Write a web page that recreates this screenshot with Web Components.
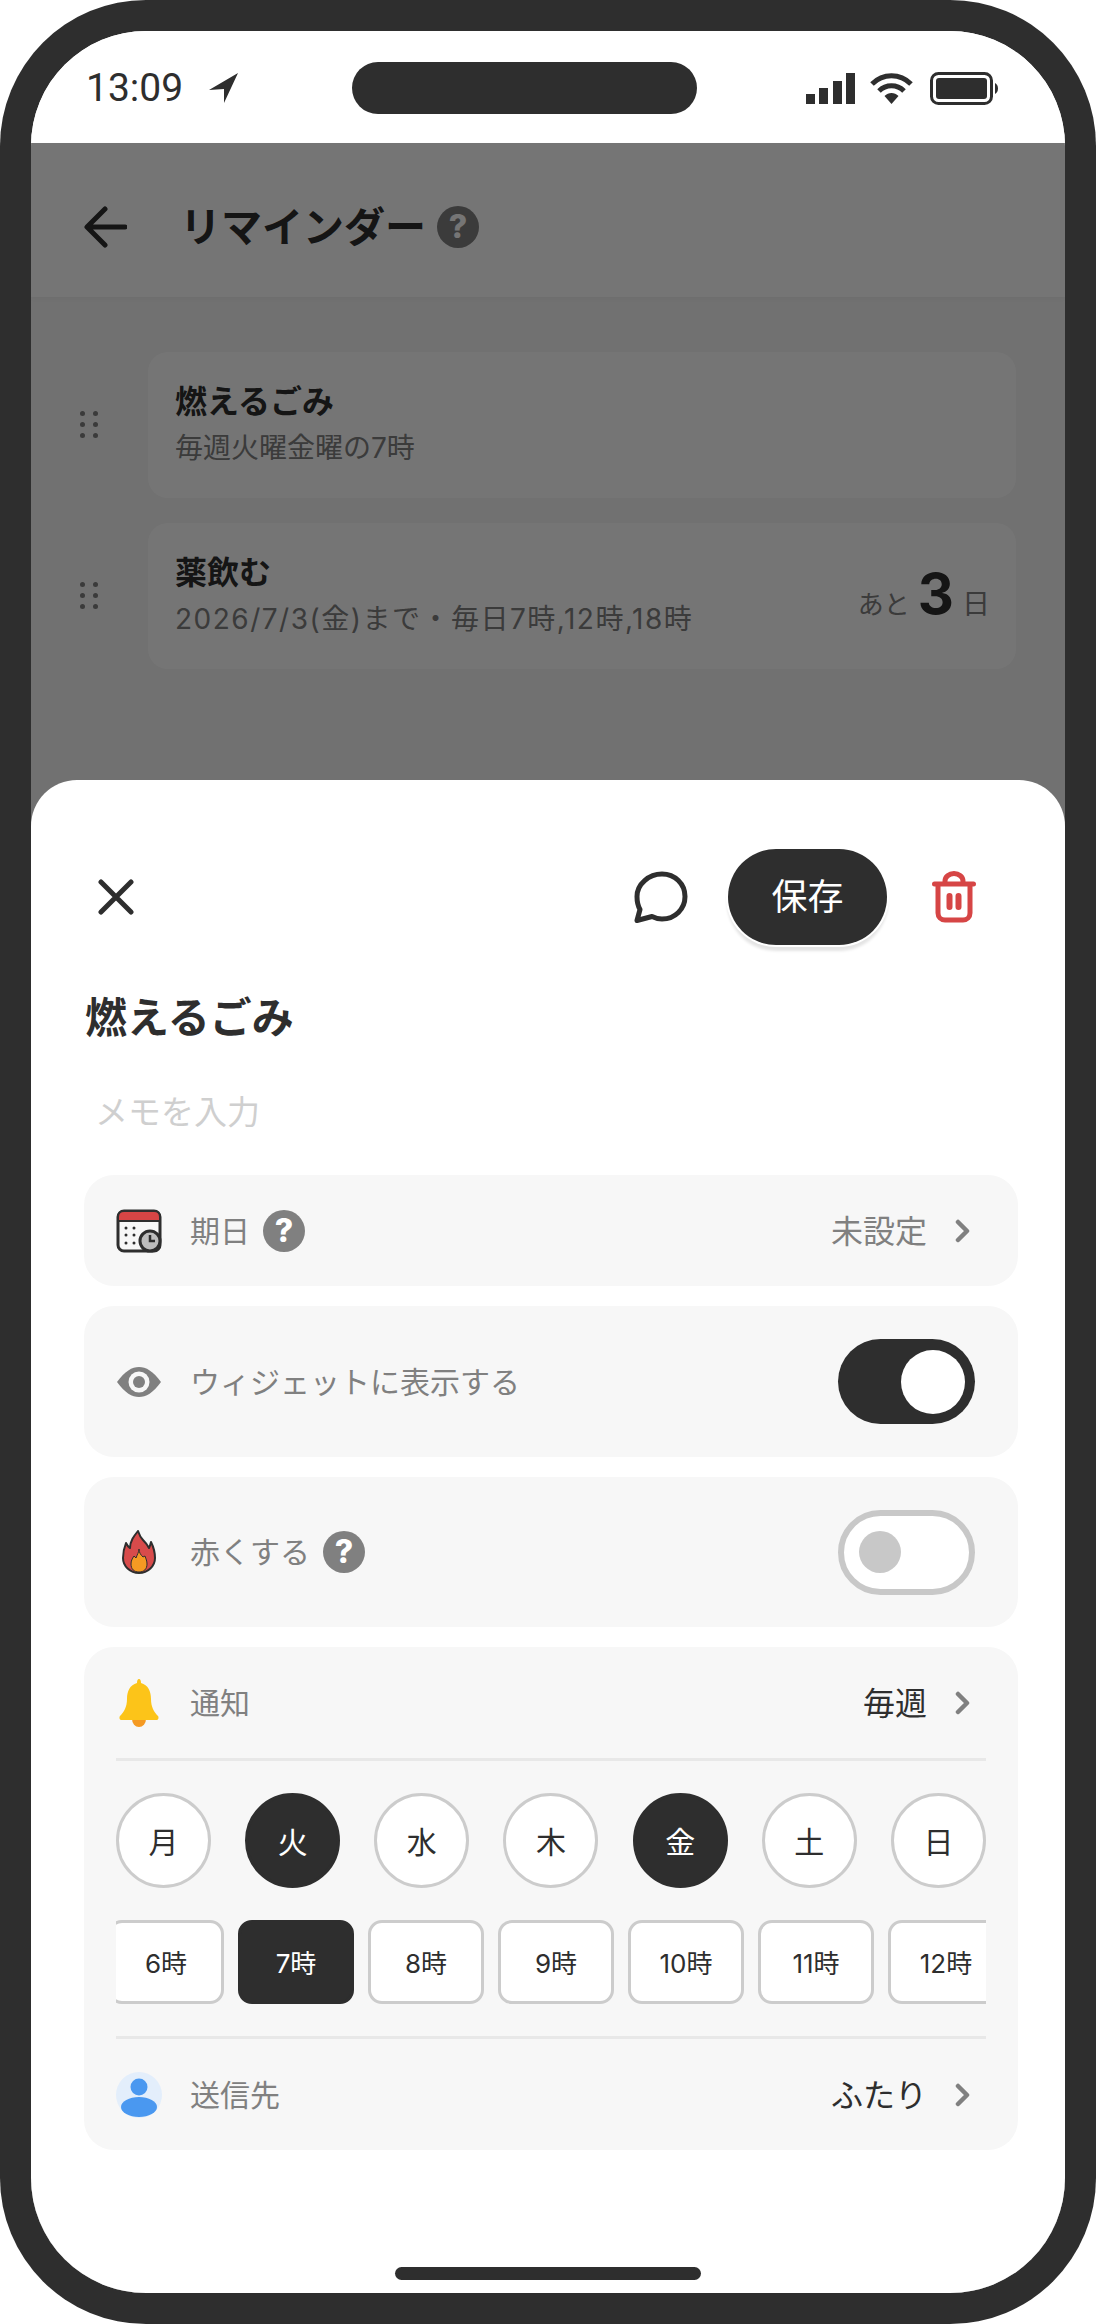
<!DOCTYPE html>
<html lang="ja">
<head>
<meta charset="utf-8">
<title>リマインダー</title>
<style>
  html, body { margin: 0; padding: 0; background: #fff; }
  body { font-family: Inter, "Noto Sans CJK JP", "Noto Sans", sans-serif; color: #2e2e2e; }
</style>
</head>
<body>
<phone-frame>
  <status-bar></status-bar>
  <app-header>リマインダー</app-header>
  <reminder-list>
    <reminder-card title="燃えるごみ" sub="毎週火曜金曜の7時"></reminder-card>
    <reminder-card title="薬飲む" sub="2026/7/3(金)まで・毎日7時,12時,18時" days="3" style="--sub-spacing:1.5px"></reminder-card>
  </reminder-list>
  <bottom-sheet slot="sheet">
    <sheet-toolbar></sheet-toolbar>
    <sheet-title>燃えるごみ</sheet-title>
    <memo-input>メモを入力</memo-input>
    <setting-card>
      <setting-row icon="calendar" value="未設定" help style="--row-h:111px">期日</setting-row>
    </setting-card>
    <setting-card>
      <setting-row icon="eye" toggle="on" style="--row-h:151px">ウィジェットに表示する</setting-row>
    </setting-card>
    <setting-card>
      <setting-row icon="fire" toggle="off" help style="--row-h:150px">赤くする</setting-row>
    </setting-card>
    <setting-card>
      <setting-row icon="bell" value="毎週" strong style="--row-h:111px">通知</setting-row>
      <day-row>
        <day-chip>月</day-chip>
        <day-chip active>火</day-chip>
        <day-chip>水</day-chip>
        <day-chip>木</day-chip>
        <day-chip active>金</day-chip>
        <day-chip>土</day-chip>
        <day-chip>日</day-chip>
      </day-row>
      <hour-row>
        <hour-chip>6時</hour-chip>
        <hour-chip active>7時</hour-chip>
        <hour-chip>8時</hour-chip>
        <hour-chip>9時</hour-chip>
        <hour-chip>10時</hour-chip>
        <hour-chip>11時</hour-chip>
        <hour-chip>12時</hour-chip>
      </hour-row>
      <setting-row icon="person" value="ふたり" strong style="--row-h:111px" class="last">送信先</setting-row>
    </setting-card>
  </bottom-sheet>
</phone-frame>

<script>
const ICONS = {
  back: '<svg width="43" height="42" viewBox="0 0 43 42" fill="none" stroke="#2e2e2e" stroke-width="5" stroke-linecap="round" stroke-linejoin="round"><path d="M21 3 3 21l18 18M4 21h37"/></svg>',
  close: '<svg width="36" height="36" viewBox="0 0 36 36" fill="none" stroke="#2e2e2e" stroke-width="5" stroke-linecap="round"><path d="M3 3l30 30M33 3 3 33"/></svg>',
  comment: '<svg width="54" height="52" viewBox="0 0 54 52" fill="none" stroke="#2e2e2e" stroke-width="5" stroke-linejoin="round"><path d="M28 3c13 0 23 10 23 22.500S41 48 28 48c-4 0-7-1-10-2.500L3 49.500l3-11C4 35 3 30 3 25.500 3 13 15 3 28 3z"/></svg>',
  trash: '<svg width="44" height="52" viewBox="0 0 44 52" fill="none" stroke="#d64545" stroke-width="5" stroke-linecap="round"><path d="M2.500 13h39M13 12V10c0-4 4-7.500 9-7.500s9 3.500 9 7.500v2M6 14v28c0 4 3 7 7 7h18c4 0 7-3 7-7V14"/><path d="M17.500 25v11M26.500 25v11" stroke-width="6"/></svg>',
  calendar: '<svg width="46" height="46" viewBox="0 0 46 46"><rect x="2" y="3" width="42" height="40" rx="6" fill="#f7f7f7" stroke="#2e2e2e" stroke-width="3"/><path d="M2 13V9c0-3.500 2.500-6 6-6h30c3.500 0 6 2.500 6 6v4z" fill="#d64545" stroke="#2e2e2e" stroke-width="2"/><g fill="#2e2e2e"><circle cx="10" cy="20" r="1.500"/><circle cx="18" cy="20" r="1.500"/><circle cx="10" cy="27" r="1.500"/><circle cx="18" cy="27" r="1.500"/><circle cx="10" cy="35" r="1.500"/><circle cx="18" cy="35" r="1.500"/></g><circle cx="34" cy="33" r="10" fill="#bdbdbd" stroke="#2e2e2e" stroke-width="3"/><path d="M34 27v6h5" fill="none" stroke="#2e2e2e" stroke-width="2.500"/></svg>',
  eye: '<svg width="44" height="30" viewBox="0 0 44 30"><path d="M0 15C8 4 15 0 22 0s14 4 22 15c-8 11-15 15-22 15S8 26 0 15z" fill="#808080"/><circle cx="22" cy="15" r="10.500" fill="#f7f7f7"/><circle cx="22" cy="15" r="6" fill="#808080"/></svg>',
  fire: '<svg width="34" height="44" viewBox="0 0 34 44"><path d="M16 1c1 3 2 6 5 9 3 3 5 6 6 8 1-2 1.500-4 2-6 2 4 4 9 4 16 0 8-7 15-16 15S1 36 1 28c0-5 1-10 3-15 1 2 2 4 4 5 0-7 4-12 8-17z" fill="#d84b4b" stroke="#2e2e2e" stroke-width="2" stroke-linejoin="round"/><path d="M17 19c0 4 2 6 4 8l2-1c1 3 2 5 2 8 0 5-3 8-8 8s-8-3-8-8c0-3 1-5 3-8l2 2c1-3 3-6 3-9z" fill="#f59a23" stroke="#2e2e2e" stroke-width="1"/></svg>',
  bell: '<svg width="40" height="48" viewBox="0 0 40 48"><path d="M13 40a7 8 0 0 0 14 0z" fill="#f59a23"/><path d="M20 0c1.500 0 2 2 2 4 7 2 10 8 10 16 0 8 3 13 7 17 1 1 .5 4-1 4H2c-1.500 0-2-3-1-4 4-4 7-9 7-17 0-8 3-14 10-16 0-2 .5-4 2-4z" fill="#fcc419"/></svg>',
  person: '<svg width="46" height="46" viewBox="0 0 46 46"><circle cx="23" cy="23" r="23" fill="#e3eefb"/><circle cx="23" cy="15" r="8.500" fill="#4a98f0"/><ellipse cx="23" cy="35" rx="18" ry="10" fill="#4a98f0"/></svg>'
};

class PhoneFrame extends HTMLElement {
  constructor() {
    super();
    this.attachShadow({ mode: 'open' });
    this.shadowRoot.innerHTML = `
      <style>
        :host { display: block; width: 1096px; height: 2324px; box-sizing: border-box;
          background: #2e2e2e; border-radius: 146px; padding: 31px; }
        .screen { position: relative; height: 100%; border-radius: 115px; overflow: hidden; background: #f6f6f6; }
        .scrim { position: absolute; left: 0; right: 0; top: 112px; bottom: 0; background: rgba(0,0,0,.54); }
      </style>
      <div class="screen">
        <slot></slot>
        <div class="scrim"></div>
        <slot name="sheet"></slot>
      </div>`;
  }
}

class StatusBar extends HTMLElement {
  constructor() {
    super();
    this.attachShadow({ mode: 'open' });
    this.shadowRoot.innerHTML = `
      <style>
        :host { display: flex; box-sizing: border-box; height: 112px; padding-top: 31px; background: #fff; align-items: flex-start; }
        .left { width: 321px; height: 52px; display: flex; align-items: center; box-sizing: border-box; padding-left: 55px; }
        .time { font: 400 39px/52px Roboto, sans-serif; color: #2e2e2e; }
        .arrow { margin-left: 26px; display: block; }
        .island { width: 345px; height: 52px; border-radius: 26px; background: #2e2e2e; }
        .right { flex: 1; height: 52px; display: flex; align-items: center; justify-content: flex-end; padding-right: 67px; }
        svg { display: block; }
      </style>
      <div class="left">
        <span class="time">13:09</span>
        <svg class="arrow" width="30" height="30" viewBox="0 0 30 30"><path d="M29 0 0 17l15-1v14z" fill="#2e2e2e"/></svg>
      </div>
      <div class="island"></div>
      <div class="right">
        <svg width="49" height="31" viewBox="0 0 49 31" fill="#2e2e2e"><rect x="0" y="21" width="9" height="10"/><rect x="13" y="15" width="9" height="16"/><rect x="27" y="8" width="9" height="23"/><rect x="40" y="0" width="9" height="31"/></svg>
        <svg style="margin-left:15px" width="43" height="31" viewBox="0 0 43 31" fill="none" stroke="#2e2e2e" stroke-width="5"><path d="M2 11C13 0 30 0 41 11M9 18c7-7 18-7 25 0"/><path d="M14.500 23c4-4 10-4 14 0l-7 8z" fill="#2e2e2e" stroke="none"/></svg>
        <svg style="margin-left:17px" width="68" height="33" viewBox="0 0 68 33"><rect x="1.500" y="1.500" width="60" height="30" rx="7" fill="none" stroke="#2e2e2e" stroke-width="3"/><rect x="6" y="6" width="51" height="21" rx="3" fill="#2e2e2e"/><path d="M65 11c2 1 3 3 3 5.500S67 21 65 22z" fill="#2e2e2e"/></svg>
      </div>`;
  }
}

class AppHeader extends HTMLElement {
  constructor() {
    super();
    this.attachShadow({ mode: 'open' });
    this.shadowRoot.innerHTML = `
      <style>
        :host { display: flex; align-items: center; box-sizing: border-box; height: 154px; padding: 14px 0 0 53px; background: #fff;
          box-shadow: 0 2px 4px rgba(0,0,0,.04); position: relative; }
        .back { display: block; margin-right: 53px; line-height: 0; }
        .title { font-size: 41px; font-weight: 700; color: #2e2e2e; line-height: 56px; margin-right: 11px; }
      </style>
      <span class="back">${ICONS.back}</span>
      <span class="title"><slot></slot></span>
      <help-badge></help-badge>`;
  }
}

class ReminderList extends HTMLElement {
  constructor() {
    super();
    this.attachShadow({ mode: 'open' });
    this.shadowRoot.innerHTML = `
      <style>
        :host { display: flex; flex-direction: column; gap: 25px; padding: 55px 49px 0 49px; }
      </style>
      <slot></slot>`;
  }
}

class ReminderCard extends HTMLElement {
  connectedCallback() {
    if (this.shadowRoot) return;
    this.attachShadow({ mode: 'open' });
    const days = this.getAttribute('days');
    this.shadowRoot.innerHTML = `
      <style>
        :host { display: flex; align-items: center; gap: 50px; }
        .dots { display: grid; grid-template-columns: 5px 5px; gap: 6px 8px; width: 18px; margin-top: -1px; }
        .dots i { width: 5px; height: 5px; border-radius: 50%; background: #808080; }
        .card { flex: 1; height: 146px; box-sizing: border-box; background: #fff; border-radius: 20px;
          padding: 28px 26px 0 27px; display: flex; justify-content: space-between; }
        .title { font-size: 32px; font-weight: 700; line-height: 44px; color: #2e2e2e; }
        .sub { font-size: 28px; line-height: 40px; margin-top: 4px; color: #808080; letter-spacing: var(--sub-spacing, 0); }
        .left { display: flex; align-items: baseline; margin-top: 8px; height: 70px; font-size: 26px; color: #808080; }
        .left b { font: 700 56px/70px Inter, sans-serif; color: #2e2e2e; margin: 0 8px 0 8px; }
        .left span:last-child { font-size: 28px; }
      </style>
      <div class="dots"><i></i><i></i><i></i><i></i><i></i><i></i></div>
      <div class="card">
        <div>
          <div class="title">${this.getAttribute('title')}</div>
          <div class="sub">${this.getAttribute('sub')}</div>
        </div>
        ${days ? `<div class="left"><span>あと</span><b>${days}</b><span>日</span></div>` : ''}
      </div>`;
  }
}

class BottomSheet extends HTMLElement {
  constructor() {
    super();
    this.attachShadow({ mode: 'open' });
    this.shadowRoot.innerHTML = `
      <style>
        :host { position: absolute; left: 0; right: 0; top: 749px; bottom: 0; background: #fff;
          border-radius: 46px 46px 0 0; display: flex; flex-direction: column; }
        .body { display: flex; flex-direction: column; gap: 20px; padding: 69px 47px 0 53px; }
        .home { width: 306px; height: 13px; border-radius: 7px; background: #2e2e2e; margin: auto auto 13px; }
      </style>
      <div class="body"><slot></slot></div>
      <div class="home"></div>`;
  }
}

class SheetToolbar extends HTMLElement {
  constructor() {
    super();
    this.attachShadow({ mode: 'open' });
    this.shadowRoot.innerHTML = `
      <style>
        :host { display: flex; align-items: center; height: 96px; padding: 0 42px 0 14px; }
        span { display: block; line-height: 0; }
        .close { margin-right: auto; }
        .save { width: 159px; height: 96px; margin: 0 45px 0 40px; border-radius: 48px; background: #2e2e2e; color: #fff;
          font-size: 36px; line-height: 96px; text-align: center; box-shadow: 0 0 0 2px #fff, 0 5px 3px 1px #e4e4e4; }
      </style>
      <span class="close">${ICONS.close}</span>
      <span>${ICONS.comment}</span>
      <div class="save">保存</div>
      <span>${ICONS.trash}</span>`;
  }
}

class SheetTitle extends HTMLElement {
  constructor() {
    super();
    this.attachShadow({ mode: 'open' });
    this.shadowRoot.innerHTML = `
      <style>
        :host { display: block; margin-top: 25px; padding-left: 1px; font-size: 42px; font-weight: 700; line-height: 56px; color: #2e2e2e; }
      </style>
      <slot></slot>`;
  }
}

class MemoInput extends HTMLElement {
  constructor() {
    super();
    this.attachShadow({ mode: 'open' });
    this.shadowRoot.innerHTML = `
      <style>
        :host { display: block; margin: 24px 0 21px; padding-left: 11px; font-size: 33px; line-height: 44px; color: #cfcfcf; }
      </style>
      <slot></slot>`;
  }
}

class SettingCard extends HTMLElement {
  constructor() {
    super();
    this.attachShadow({ mode: 'open' });
    this.shadowRoot.innerHTML = `
      <style>
        :host { display: block; background: #f7f7f7; border-radius: 30px; padding: 0 32px; }
      </style>
      <slot></slot>`;
  }
}

class SettingRow extends HTMLElement {
  connectedCallback() {
    if (this.shadowRoot) return;
    this.attachShadow({ mode: 'open' });
    const value = this.getAttribute('value');
    const toggle = this.getAttribute('toggle');
    this.shadowRoot.innerHTML = `
      <style>
        :host { display: flex; align-items: center; height: var(--row-h); }
        .icon { width: 46px; display: flex; justify-content: center; margin-right: 28px; line-height: 0; }
        .label { font-size: 30px; color: #808080; line-height: 42px; }
        help-badge { margin-left: 13px; }
        .value { margin-left: auto; font-size: 32px; line-height: 44px; padding-top: 2px; color: ${this.hasAttribute('strong') ? '#2e2e2e' : '#808080'}; }
        .chev { display: block; margin: 0 16px 0 28px; }
        toggle-switch { margin-left: auto; margin-right: 11px; }
      </style>
      <span class="icon">${ICONS[this.getAttribute('icon')]}</span>
      <span class="label"><slot></slot></span>
      ${this.hasAttribute('help') ? '<help-badge></help-badge>' : ''}
      ${value ? `<span class="value">${value}</span>
      <svg class="chev" width="15" height="24" viewBox="0 0 15 24" fill="none" stroke="#808080" stroke-width="4.500" stroke-linecap="round" stroke-linejoin="round"><path d="M3 3l9 9-9 9"/></svg>` : ''}
      ${toggle ? `<toggle-switch ${toggle === 'on' ? 'on' : ''}></toggle-switch>` : ''}`;
  }
}

class HelpBadge extends HTMLElement {
  constructor() {
    super();
    this.attachShadow({ mode: 'open' });
    this.shadowRoot.innerHTML = `
      <style>
        :host { display: flex; align-items: center; justify-content: center; width: 42px; height: 42px; border-radius: 50%;
          background: #808080; color: #fff; font: 800 32px/42px Inter, sans-serif; }
      </style>
      ?`;
  }
}

class ToggleSwitch extends HTMLElement {
  connectedCallback() {
    if (this.shadowRoot) return;
    this.attachShadow({ mode: 'open' });
    this.shadowRoot.innerHTML = `
      <style>
        :host { display: flex; align-items: center; box-sizing: border-box; width: 137px; height: 85px; border-radius: 43px;
          background: #fff; border: 6px solid #c8c8c8; padding-left: 15px; }
        :host([on]) { background: #2e2e2e; border: 0; padding: 0 10px 0 0; justify-content: flex-end; }
        i { display: block; width: 42px; height: 42px; border-radius: 50%; background: #c8c8c8; }
        :host([on]) i { width: 64px; height: 64px; background: #fff; }
      </style>
      <i></i>`;
  }
}

class DayRow extends HTMLElement {
  constructor() {
    super();
    this.attachShadow({ mode: 'open' });
    this.shadowRoot.innerHTML = `
      <style>
        :host { display: flex; justify-content: space-between; padding-top: 32px; border-top: 3px solid #e8e8e8; }
      </style>
      <slot></slot>`;
  }
}

class DayChip extends HTMLElement {
  constructor() {
    super();
    this.attachShadow({ mode: 'open' });
    this.shadowRoot.innerHTML = `
      <style>
        :host { display: flex; align-items: center; justify-content: center; box-sizing: border-box; width: 95px; height: 95px;
          border-radius: 50%; background: #fff; border: 3px solid #cccccc; color: #2e2e2e; font-size: 30px; padding-bottom: 2px; }
        :host([active]) { background: #2e2e2e; border-color: #2e2e2e; color: #fff; }
      </style>
      <slot></slot>`;
  }
}

class HourRow extends HTMLElement {
  constructor() {
    super();
    this.attachShadow({ mode: 'open' });
    this.shadowRoot.innerHTML = `
      <style>
        :host { display: block; margin-top: 32px; overflow: hidden; padding-bottom: 32px; border-bottom: 3px solid #e8e8e8; }
        .track { display: flex; gap: 14px; margin-left: -8px; width: max-content; }
      </style>
      <div class="track"><slot></slot></div>`;
  }
}

class HourChip extends HTMLElement {
  constructor() {
    super();
    this.attachShadow({ mode: 'open' });
    this.shadowRoot.innerHTML = `
      <style>
        :host { display: flex; align-items: center; justify-content: center; box-sizing: border-box; width: 116px; height: 84px;
          border-radius: 14px; background: #fff; border: 3px solid #cccccc; color: #2e2e2e; font-size: 26px; padding-bottom: 2px; }
        :host([active]) { background: #2e2e2e; border-color: #2e2e2e; color: #fff; }
      </style>
      <slot></slot>`;
  }
}

customElements.define('phone-frame', PhoneFrame);
customElements.define('status-bar', StatusBar);
customElements.define('app-header', AppHeader);
customElements.define('reminder-list', ReminderList);
customElements.define('reminder-card', ReminderCard);
customElements.define('bottom-sheet', BottomSheet);
customElements.define('sheet-toolbar', SheetToolbar);
customElements.define('sheet-title', SheetTitle);
customElements.define('memo-input', MemoInput);
customElements.define('setting-card', SettingCard);
customElements.define('setting-row', SettingRow);
customElements.define('help-badge', HelpBadge);
customElements.define('toggle-switch', ToggleSwitch);
customElements.define('day-row', DayRow);
customElements.define('day-chip', DayChip);
customElements.define('hour-row', HourRow);
customElements.define('hour-chip', HourChip);
</script>
</body>
</html>
